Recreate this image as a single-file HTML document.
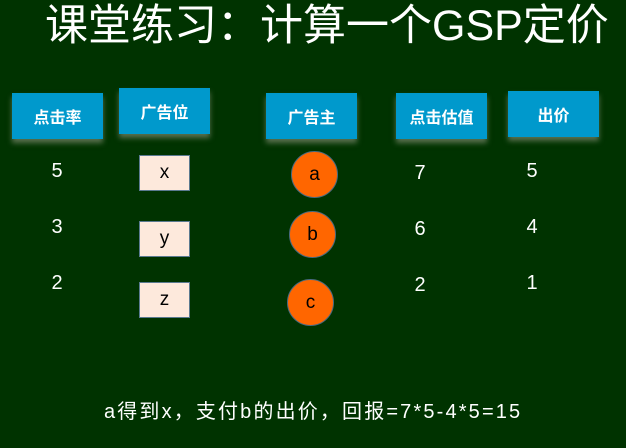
<!DOCTYPE html>
<html><head><meta charset="utf-8"><style>
body{margin:0;width:626px;height:448px;background:#003300;overflow:hidden;position:relative;font-family:"Liberation Sans","Noto Sans CJK SC",sans-serif;color:#fff}
.t{position:absolute;left:45px;top:1px;font-size:43px;line-height:50px;white-space:nowrap}
.h{position:absolute;width:91px;height:46px;background:#0099cc;color:#fff;font-weight:bold;font-size:16px;display:flex;align-items:center;justify-content:center;box-shadow:0 4px 5px rgba(160,160,140,.55)}
.n{position:absolute;font-size:20px;width:30px;text-align:center}
.b{position:absolute;left:139px;width:51px;height:36px;background:#fde9dc;border:1px solid #5a7a90;color:#000;font-size:19px;display:flex;align-items:center;justify-content:center;box-sizing:border-box}
.c{position:absolute;width:47px;height:47px;border-radius:50%;background:#ff6600;border:1px solid #4a6a80;color:#000;font-size:19px;display:flex;align-items:center;justify-content:center;box-sizing:border-box}
.f{position:absolute;left:104px;top:395px;font-size:20px;letter-spacing:2.15px;white-space:nowrap}
</style></head><body>
<div class="t">课堂练习：计算一个GSP定价</div>
<div class="h" style="left:12px;top:93px">点击率</div>
<div class="h" style="left:119px;top:88px">广告位</div>
<div class="h" style="left:266px;top:93px">广告主</div>
<div class="h" style="left:396px;top:93px">点击估值</div>
<div class="h" style="left:508px;top:91px">出价</div>
<div class="n" style="left:42px;top:160px">5</div>
<div class="n" style="left:42px;top:216px">3</div>
<div class="n" style="left:42px;top:272px">2</div>
<div class="b" style="top:155px">x</div>
<div class="b" style="top:221px">y</div>
<div class="b" style="top:282px">z</div>
<div class="c" style="left:291px;top:151px">a</div>
<div class="c" style="left:289px;top:211px">b</div>
<div class="c" style="left:287px;top:279px">c</div>
<div class="n" style="left:405px;top:162px">7</div>
<div class="n" style="left:405px;top:218px">6</div>
<div class="n" style="left:405px;top:274px">2</div>
<div class="n" style="left:517px;top:160px">5</div>
<div class="n" style="left:517px;top:216px">4</div>
<div class="n" style="left:517px;top:272px">1</div>
<div class="f">a得到x，支付b的出价，回报=7*5-4*5=15</div>
</body></html>
